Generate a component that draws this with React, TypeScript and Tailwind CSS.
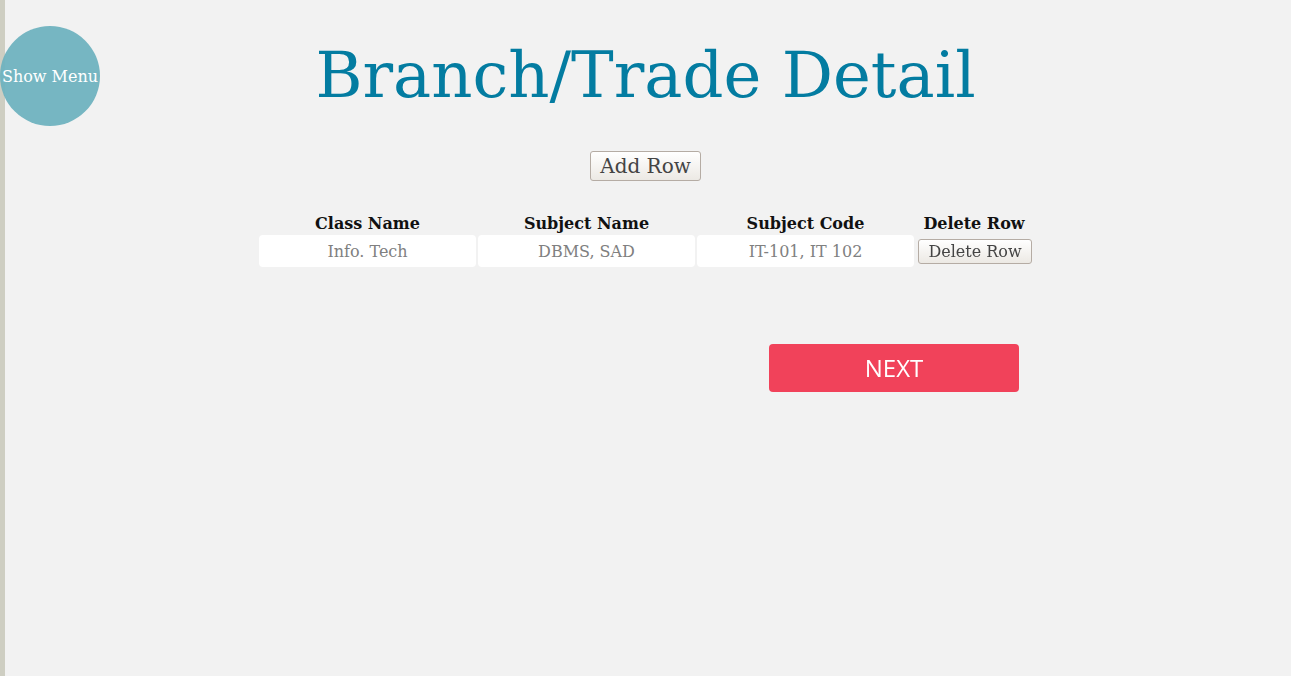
const columns = [
  { label: "Class Name", placeholder: "Info. Tech" },
  { label: "Subject Name", placeholder: "DBMS, SAD" },
  { label: "Subject Code", placeholder: "IT-101, IT 102" },
];

export default function App() {
  return (
    <div className="flex min-h-[676px] w-full bg-[#f2f2f2] font-['DejaVu_Serif',serif]">
      {/* left edge */}
      <div className="w-[5px] shrink-0 bg-[#cecec2]" />

      <div className="relative flex-1">
        {/* Show Menu bubble */}
        <button className="absolute left-[-5px] top-[26px] flex h-[100px] w-[100px] items-center justify-center rounded-full bg-[#6fb2bf]/95 pt-[2px] text-[16px] text-white">
          Show Menu
        </button>

        <div className="flex flex-col items-center pr-[5px]">
          <h1 className="mt-[35px] text-[64px] leading-[80px] text-[#037ca1]">
            Branch/Trade Detail
          </h1>

          <button className="mt-[36px] h-[30px] rounded-[3px] border border-[#b5aca4] bg-gradient-to-b from-white to-[#ece9e4] px-[9px] text-[20px] leading-none text-[#444]">
            Add Row
          </button>

          {/* Table */}
          <div className="mt-[33px] grid grid-cols-[217px_217px_217px_116px] gap-x-[2px] text-[16px]">
            {columns.map((c) => (
              <div key={c.label} className="text-center font-bold leading-[20px] text-[#111]">
                {c.label}
              </div>
            ))}
            <div className="text-center font-bold leading-[20px] text-[#111]">Delete Row</div>

            {columns.map((c, i) => (
              <input
                key={c.placeholder}
                autoFocus={i === 0}
                placeholder={c.placeholder}
                className="mt-[1px] h-[32px] rounded-[4px] bg-white text-center text-[16px] caret-[#222] outline-none placeholder:text-[#808080]"
              />
            ))}
            <div className="mt-[5px] flex justify-end">
              <button className="h-[25px] w-[114px] rounded-[3px] border border-[#b5aca4] bg-gradient-to-b from-white to-[#ece9e4] text-[16px] leading-none text-[#444]">
                Delete Row
              </button>
            </div>
          </div>

          <div className="mt-[77px] flex w-[773px] justify-end pr-[13px]">
            <button className="h-[48px] w-[250px] rounded-[4px] bg-[#f1425a] font-['Open_Sans',sans-serif] text-[24px] text-white">
              NEXT
            </button>
          </div>
        </div>
      </div>
    </div>
  );
}
